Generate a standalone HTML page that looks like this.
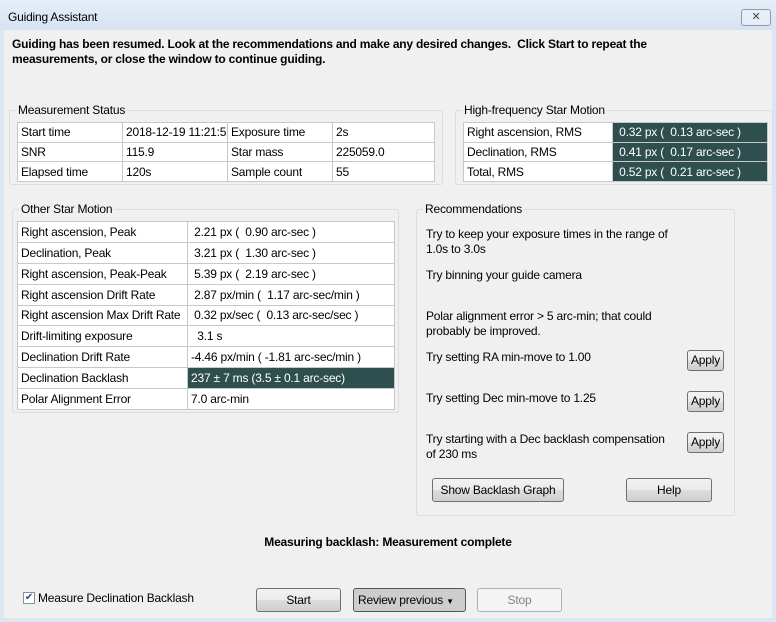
<!DOCTYPE html>
<html><head><style>
*{box-sizing:border-box;margin:0;padding:0}
body{width:776px;height:622px;overflow:hidden;background:#dbe6f3;font-family:"Liberation Sans",sans-serif;font-size:12px;color:#000;position:relative;letter-spacing:-0.2px}
.a{position:absolute}
#title{left:0;top:0;width:776px;height:30px;background:linear-gradient(#e6eef8,#d6e3f2)}
#body{left:4px;top:30px;width:768px;height:588px;background:#f0f0f0}
.grp{position:absolute;border:1px solid #d5dfe5;border-radius:3px}
.gl{position:absolute;background:#f0f0f0;padding:0 2px;top:-9px;left:6px;line-height:16px}
table{position:absolute;border-collapse:collapse;background:#fff;table-layout:fixed}
td{border:1px solid #c8c8c8;padding:0 3px;white-space:nowrap;overflow:hidden}
.dk{background:#2f4f4f;color:#fff}
.btn{position:absolute;border:1px solid #707070;border-radius:3px;background:linear-gradient(#f2f2f2,#ebebeb 50%,#dddddd 51%,#cfcfcf);text-align:center;font-size:12px}
</style></head><body>
<div id="title" class="a"><span class="a" style="left:8px;top:10px">Guiding Assistant</span>
<div class="a" style="left:741px;top:9px;width:30px;height:17px;border:1px solid #8a9bb0;border-radius:3px;background:#e8eef6;text-align:center;line-height:15px;font-size:11px;color:#444">✕</div></div>
<div id="body" class="a"></div>
<div class="a" style="left:12px;top:37px;font-weight:bold;line-height:15px;width:700px">Guiding has been resumed. Look at the recommendations and make any desired changes.&nbsp; Click Start to repeat the measurements, or close the window to continue guiding.</div>

<div class="grp" style="left:9px;top:110px;width:434px;height:75px"><span class="gl">Measurement Status</span></div>
<table style="left:17px;top:122px;width:418px;height:60px">
<col style="width:105px"><col style="width:105px"><col style="width:105px"><col>
<tr><td>Start time</td><td style="padding-right:0;text-overflow:clip">2018-12-19 11:21:52</td><td>Exposure time</td><td>2s</td></tr>
<tr><td>SNR</td><td>115.9</td><td>Star mass</td><td>225059.0</td></tr>
<tr><td>Elapsed time</td><td>120s</td><td>Sample count</td><td>55</td></tr></table>

<div class="grp" style="left:455px;top:110px;width:318px;height:75px"><span class="gl">High-frequency Star Motion</span></div>
<table style="left:463px;top:122px;width:305px;height:60px">
<col style="width:149px"><col>
<tr><td>Right ascension, RMS</td><td class="dk">&nbsp;0.32 px (&nbsp; 0.13 arc-sec )</td></tr>
<tr><td>Declination, RMS</td><td class="dk">&nbsp;0.41 px (&nbsp; 0.17 arc-sec )</td></tr>
<tr><td>Total, RMS</td><td class="dk">&nbsp;0.52 px (&nbsp; 0.21 arc-sec )</td></tr></table>

<div class="grp" style="left:12px;top:209px;width:387px;height:204px"><span class="gl">Other Star Motion</span></div>
<table style="left:17px;top:221px;width:378px;height:189px">
<col style="width:170px"><col>
<tr><td>Right ascension, Peak</td><td>&nbsp;2.21 px (&nbsp; 0.90 arc-sec )</td></tr>
<tr><td>Declination, Peak</td><td>&nbsp;3.21 px (&nbsp; 1.30 arc-sec )</td></tr>
<tr><td>Right ascension, Peak-Peak</td><td>&nbsp;5.39 px (&nbsp; 2.19 arc-sec )</td></tr>
<tr><td>Right ascension Drift Rate</td><td>&nbsp;2.87 px/min (&nbsp; 1.17 arc-sec/min )</td></tr>
<tr><td>Right ascension Max Drift Rate</td><td>&nbsp;0.32 px/sec (&nbsp; 0.13 arc-sec/sec )</td></tr>
<tr><td>Drift-limiting exposure</td><td>&nbsp; 3.1 s</td></tr>
<tr><td>Declination Drift Rate</td><td>-4.46 px/min ( -1.81 arc-sec/min )</td></tr>
<tr><td>Declination Backlash</td><td class="dk">237 ± 7 ms (3.5 ± 0.1 arc-sec)</td></tr>
<tr><td>Polar Alignment Error</td><td>7.0 arc-min</td></tr></table>

<div class="grp" style="left:416px;top:209px;width:319px;height:307px"><span class="gl">Recommendations</span></div>
<div class="a" style="left:426px;top:227px;line-height:15px">Try to keep your exposure times in the range of<br>1.0s to 3.0s</div>
<div class="a" style="left:426px;top:268px">Try binning your guide camera</div>
<div class="a" style="left:426px;top:309px;line-height:15px">Polar alignment error &gt; 5 arc-min; that could<br>probably be improved.</div>
<div class="a" style="left:426px;top:350px">Try setting RA min-move to 1.00</div>
<div class="a" style="left:426px;top:391px">Try setting Dec min-move to 1.25</div>
<div class="a" style="left:426px;top:432px;line-height:15px">Try starting with a Dec backlash compensation<br>of 230 ms</div>
<div class="btn" style="left:687px;top:350px;width:37px;height:21px;line-height:19px">Apply</div>
<div class="btn" style="left:687px;top:391px;width:37px;height:21px;line-height:19px">Apply</div>
<div class="btn" style="left:687px;top:432px;width:37px;height:21px;line-height:19px">Apply</div>
<div class="btn" style="left:432px;top:478px;width:132px;height:24px;line-height:22px">Show Backlash Graph</div>
<div class="btn" style="left:626px;top:478px;width:86px;height:24px;line-height:22px">Help</div>

<div class="a" style="left:0;width:776px;top:535px;text-align:center;font-weight:bold">Measuring backlash: Measurement complete</div>

<div class="a" style="left:23px;top:592px;width:12px;height:12px;border:1px solid #8f8f8f;background:#fff;font-size:10px;line-height:10px;text-align:center;color:#2a4a9a">✔</div>
<div class="a" style="left:38px;top:591px">Measure Declination Backlash</div>
<div class="btn" style="left:256px;top:588px;width:85px;height:24px;line-height:22px">Start</div>
<div class="btn" style="left:353px;top:588px;width:113px;height:24px;line-height:22px;background:#cdcdcd;border-color:#555;text-align:left;padding-left:4px">Review previous <span style="font-size:8px">▼</span></div>
<div class="btn" style="left:477px;top:588px;width:85px;height:24px;line-height:22px;background:#f4f4f4;border-color:#adb2b5;color:#838383">Stop</div>
</body></html>
